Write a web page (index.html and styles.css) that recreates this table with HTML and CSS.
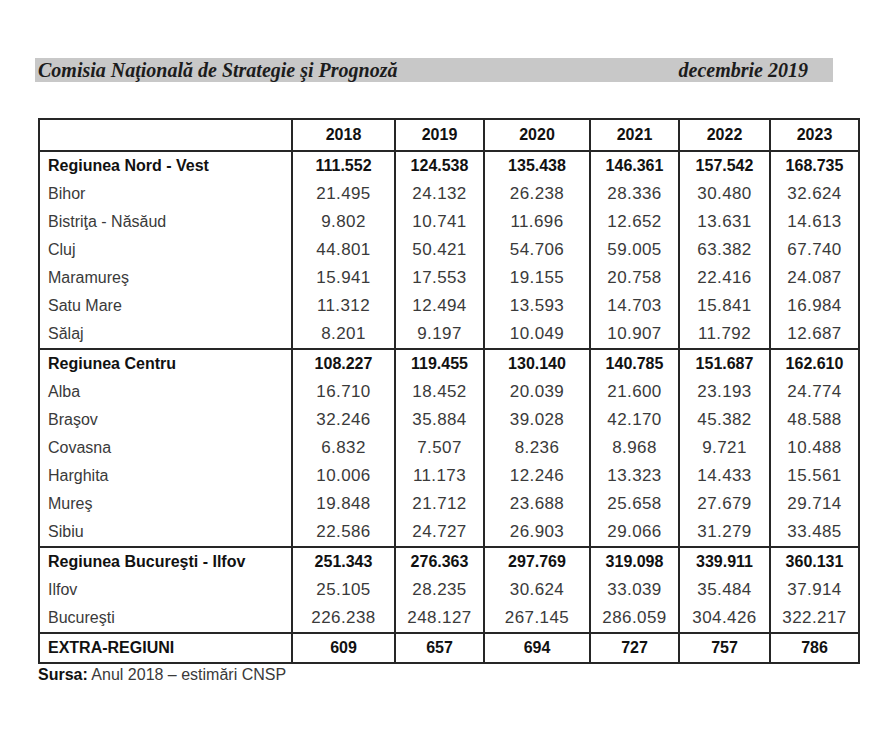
FILE: index.html
```html
<!doctype html>
<html>
    <head>
        <meta charset="utf-8">
        <link rel="stylesheet" href="styles.css">
    </head>
    <body>
        <div class="page">
            <div class="titlebar">
                <span>Comisia Naţională de Strategie şi Prognoză</span>
                <span>decembrie 2019</span>
            </div>

            <table class="data">
                <colgroup>
                    <col class="c-name">
                    <col class="c-2018">
                    <col class="c-2019">
                    <col class="c-2020">
                    <col class="c-2021">
                    <col class="c-2022">
                    <col class="c-2023">
                </colgroup>
                <tr class="head">
                    <th></th>
                    <th>2018</th>
                    <th>2019</th>
                    <th>2020</th>
                    <th>2021</th>
                    <th>2022</th>
                    <th>2023</th>
                </tr>
                <tr class="region">
                    <td>Regiunea Nord - Vest</td>
                    <td>111.552</td><td>124.538</td><td>135.438</td><td>146.361</td><td>157.542</td><td>168.735</td>
                </tr>
                <tr><td>Bihor</td><td>21.495</td><td>24.132</td><td>26.238</td><td>28.336</td><td>30.480</td><td>32.624</td></tr>
                <tr><td>Bistriţa - Năsăud</td><td>9.802</td><td>10.741</td><td>11.696</td><td>12.652</td><td>13.631</td><td>14.613</td></tr>
                <tr><td>Cluj</td><td>44.801</td><td>50.421</td><td>54.706</td><td>59.005</td><td>63.382</td><td>67.740</td></tr>
                <tr><td>Maramureş</td><td>15.941</td><td>17.553</td><td>19.155</td><td>20.758</td><td>22.416</td><td>24.087</td></tr>
                <tr><td>Satu Mare</td><td>11.312</td><td>12.494</td><td>13.593</td><td>14.703</td><td>15.841</td><td>16.984</td></tr>
                <tr><td>Sălaj</td><td>8.201</td><td>9.197</td><td>10.049</td><td>10.907</td><td>11.792</td><td>12.687</td></tr>

                <tr class="region">
                    <td>Regiunea Centru</td>
                    <td>108.227</td><td>119.455</td><td>130.140</td><td>140.785</td><td>151.687</td><td>162.610</td>
                </tr>
                <tr><td>Alba</td><td>16.710</td><td>18.452</td><td>20.039</td><td>21.600</td><td>23.193</td><td>24.774</td></tr>
                <tr><td>Braşov</td><td>32.246</td><td>35.884</td><td>39.028</td><td>42.170</td><td>45.382</td><td>48.588</td></tr>
                <tr><td>Covasna</td><td>6.832</td><td>7.507</td><td>8.236</td><td>8.968</td><td>9.721</td><td>10.488</td></tr>
                <tr><td>Harghita</td><td>10.006</td><td>11.173</td><td>12.246</td><td>13.323</td><td>14.433</td><td>15.561</td></tr>
                <tr><td>Mureş</td><td>19.848</td><td>21.712</td><td>23.688</td><td>25.658</td><td>27.679</td><td>29.714</td></tr>
                <tr><td>Sibiu</td><td>22.586</td><td>24.727</td><td>26.903</td><td>29.066</td><td>31.279</td><td>33.485</td></tr>

                <tr class="region">
                    <td>Regiunea Bucureşti - Ilfov</td>
                    <td>251.343</td><td>276.363</td><td>297.769</td><td>319.098</td><td>339.911</td><td>360.131</td>
                </tr>
                <tr><td>Ilfov</td><td>25.105</td><td>28.235</td><td>30.624</td><td>33.039</td><td>35.484</td><td>37.914</td></tr>
                <tr><td>Bucureşti</td><td>226.238</td><td>248.127</td><td>267.145</td><td>286.059</td><td>304.426</td><td>322.217</td></tr>

                <tr class="region extra">
                    <td>EXTRA-REGIUNI</td>
                    <td>609</td><td>657</td><td>694</td><td>727</td><td>757</td><td>786</td>
                </tr>
            </table>

            <p class="source"><b>Sursa:</b> Anul 2018 – estimări CNSP</p>
        </div>
    </body>
</html>
```

FILE: styles.css
```css
body {
    margin: 0;
    background: #fff;
    font-family: "Liberation Sans", Arial, sans-serif;
    color: #3a3a3a;
}
.page {
    padding: 58px 0 0 38px;
}
.titlebar {
    display: flex;
    justify-content: space-between;
    align-items: center;
    width: 798px;
    height: 24px;
    margin-left: -3px;
    padding: 0 25px 0 3px;
    box-sizing: border-box;
    background: #c8c8c8;
    font-family: "Liberation Serif", "Times New Roman", serif;
    font-style: italic;
    font-weight: bold;
    font-size: 20px;
    color: #1c1c1c;
}
.data {
    margin-top: 36px;
    border-collapse: collapse;
    table-layout: fixed;
    width: 820px;
    border: 2px solid #262626;
    font-size: 16px;
}
.c-name { width: 253px; }
.c-2018 { width: 103px; }
.c-2019 { width: 89px; }
.c-2020 { width: 106px; }
.c-2021 { width: 89px; }
.c-2022 { width: 91px; }
.c-2023 { width: 89px; }
.data th,
.data td {
    border-left: 2px solid #262626;
    border-right: 2px solid #262626;
    padding: 0;
    text-align: center;
    height: 28px;
    font-size: 17px;
    letter-spacing: 0.4px;
}
.data td:first-child {
    text-align: left;
    padding-left: 8px;
    font-size: 16px;
    letter-spacing: 0;
}
.data .head th {
    height: 30px;
    color: #111;
    font-size: 16px;
    font-weight: bold;
    letter-spacing: 0;
    border-bottom: 2px solid #262626;
}
.data .region td {
    font-weight: bold;
    color: #111;
    font-size: 16px;
    letter-spacing: 0;
    border-top: 2px solid #262626;
}
.data .head + .region td {
    border-top: 0;
}
.source {
    margin: 2px 0 0 0;
    font-size: 16px;
    color: #3a3a3a;
}
.source b {
    color: #111;
}
```
